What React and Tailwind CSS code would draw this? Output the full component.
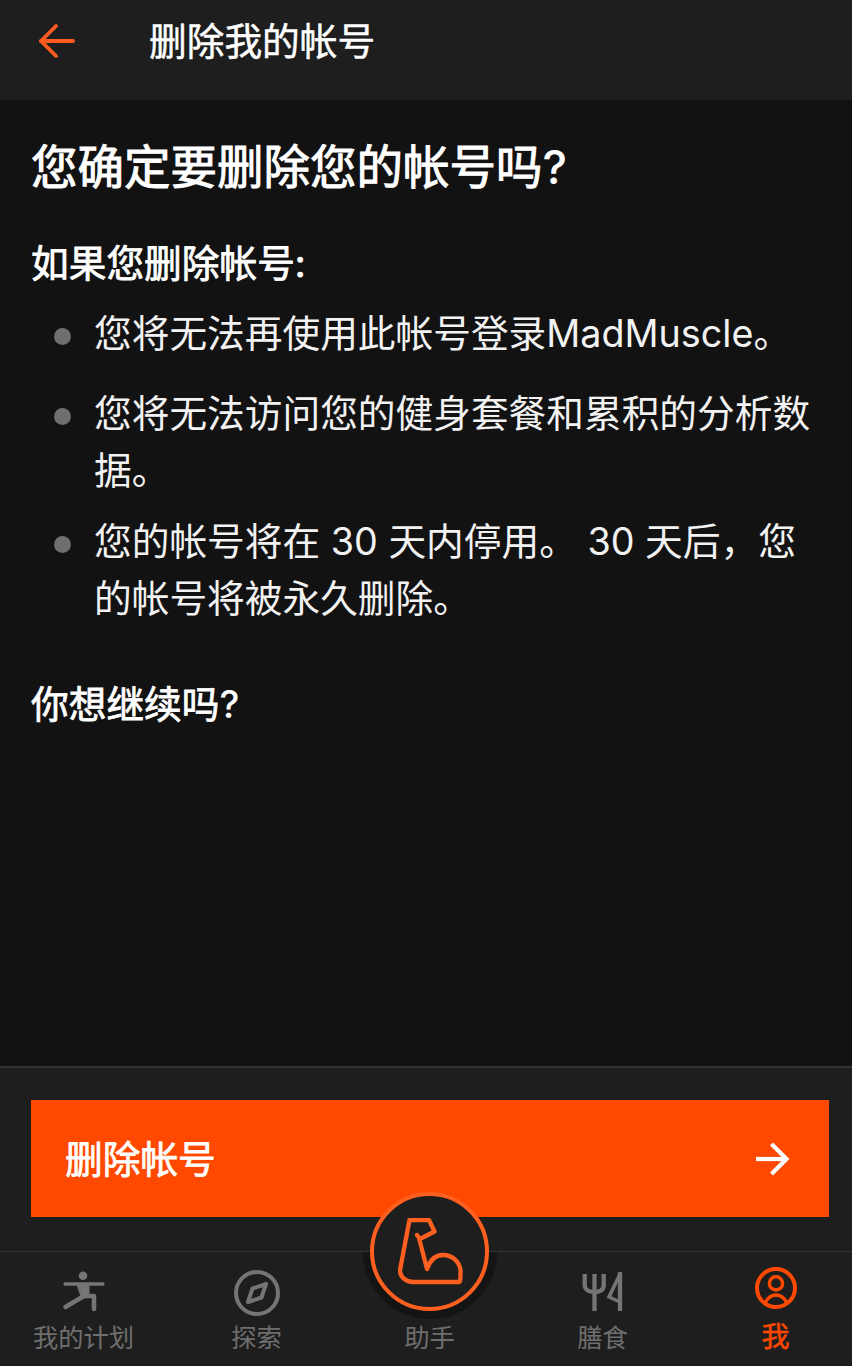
import React from 'react';

const font = "font-['Inter','Noto_Sans_CJK_SC',sans-serif]";

const Bullet = ({ children, className = '' }) => (
  <li className={`flex ${className}`}>
    <span className="w-[17px] h-[17px] rounded-full bg-[#6f6f6f] ml-[22px] mt-[23px] mr-[23px] shrink-0" />
    <p className="text-[37.7px] leading-[57px] text-[#f2f2f2] w-[725px]">{children}</p>
  </li>
);

const BackArrow = () => (
  <svg width="36" height="36" viewBox="0 0 36 36" fill="none" stroke="#ff5a1f" strokeWidth="3.8" strokeLinecap="round" strokeLinejoin="round" className="ml-[39px] mt-[23px]">
    <path d="M34 18H2" />
    <path d="M17 3L2 18L17 33" />
  </svg>
);

const NextArrow = () => (
  <svg width="36" height="36" viewBox="0 0 36 36" fill="none" stroke="#ffffff" strokeWidth="4.2">
    <path d="M2 18H33" />
    <path d="M17.500 3L32.500 18L17.500 33" />
  </svg>
);

const YogaIcon = () => (
  <svg width="44" height="44" viewBox="0 0 44 44" fill="none" stroke="#757575" strokeLinecap="round" strokeLinejoin="round" className="mb-[4px]">
    <circle cx="21" cy="6.700" r="4.300" fill="#757575" stroke="none" />
    <path d="M3 15H41" strokeWidth="3.300" />
    <path d="M22 27L3.500 38" strokeWidth="4.500" />
    <path d="M22 27H32V40" strokeWidth="4.500" />
    <path d="M15 15H27V28H19.500Z" fill="#757575" strokeWidth="1" />
  </svg>
);

const CompassIcon = () => (
  <svg width="48" height="48" viewBox="0 0 48 48" fill="none" stroke="#757575">
    <circle cx="24" cy="24" r="21" strokeWidth="4" />
    <path d="M33 15L28.500 28.500L15 33L19.500 19.500Z" strokeWidth="4" strokeLinejoin="round" />
  </svg>
);

const ForkKnifeIcon = () => (
  <svg width="42" height="42" viewBox="0 0 42 42" fill="none" stroke="#757575" strokeWidth="4.300" className="mb-[4px]">
    <path d="M2.700 3V14C2.700 18 6 21 12.500 21C19 21 21.700 18 21.700 14V3" />
    <path d="M12.500 3V40" />
    <path d="M38 1V40" />
    <path d="M38 3L27 26L38 31" strokeWidth="3.500" />
  </svg>
);

const ProfileIcon = () => (
  <svg width="44" height="44" viewBox="0 0 44 44" fill="none" stroke="#ff4800" strokeWidth="4" className="mb-[7px]">
    <circle cx="22" cy="22" r="19" />
    <circle cx="22" cy="17.400" r="6.600" strokeWidth="3.400" />
    <path d="M11 37C14 31 18 29 22 29C26 29 30 31 33 37" strokeWidth="3.500" />
  </svg>
);

const MuscleIcon = () => (
  <svg width="66" height="68" viewBox="0 0 66 68" fill="none" stroke="#ff5f1f" strokeWidth="4.300" strokeLinecap="round" strokeLinejoin="round" className="ml-[2px]">
    <path d="M19 17L22 21L36.500 13.500L31 2H11.500L2 52C2 59 8 64 15 64H61C62.500 64 62.500 60 62.500 52C61 43 54 37 45 37C38 37 32 42 29 51L21 20" />
  </svg>
);

const Tab = ({ icon, label, active }) => (
  <div className="w-[173px] shrink-0 flex flex-col items-center">
    <div className="h-[65px] flex items-end justify-center">{icon}</div>
    {active ? (
      <span className="mt-[2px] text-[28px] leading-[36px] text-[#ff4800] [-webkit-text-stroke:0.5px_#ff4800]">{label}</span>
    ) : (
      <span className="mt-[4px] text-[25.3px] leading-[34px] text-[#6e6e6e]">{label}</span>
    )}
  </div>
);

export default function App() {
  return (
    <div className={`w-[852px] h-[1366px] flex flex-col bg-[#121212] text-white overflow-hidden ${font}`}>
      <header className="h-[100px] bg-[#1e1e1e] flex items-start shrink-0">
        <BackArrow />
        <h2 className="ml-[74px] mt-[13px] text-[37.7px] leading-[56px] [-webkit-text-stroke:0.5px_white]">删除我的帐号</h2>
      </header>

      <main className="flex-1 px-[32px] pt-[37px]">
        <h1 className="-ml-[1px] text-[46.5px] leading-[60px] [-webkit-text-stroke:1px_white]">
          您确定要删除您的帐号吗<span className="font-medium [-webkit-text-stroke:0]">?</span>
        </h1>
        <h3 className="-ml-[1px] mt-[38px] text-[37.7px] leading-[56px] [-webkit-text-stroke:0.8px_white]">如果您删除帐号:</h3>
        <ul className="mt-[14px]">
          <Bullet>您将无法再使用此帐号登录MadMuscle。</Bullet>
          <Bullet className="mt-[23px]">您将无法访问您的健身套餐和累积的分析数据。</Bullet>
          <Bullet className="mt-[14px]">您的帐号将在 30 天内停用。 30 天后，您的帐号将被永久删除。</Bullet>
        </ul>
        <h3 className="-ml-[1px] mt-[49px] text-[37.7px] leading-[56px] [-webkit-text-stroke:0.8px_white]">
          你想继续吗<span className="font-medium [-webkit-text-stroke:0]">?</span>
        </h3>
      </main>

      <div className="h-[185px] shrink-0 bg-[#1e1e1e] border-t-2 border-[#333333] pt-[32px] px-[31px]">
        <button className="w-[798px] h-[117px] bg-[#ff4800] flex items-center justify-between pl-[34px] pr-[39px]">
          <span className="pt-[1px] text-[37.7px] text-white [-webkit-text-stroke:0.8px_white]">删除帐号</span>
          <NextArrow />
        </button>
      </div>

      <nav className="relative h-[115px] shrink-0 bg-[#1e1e1e] border-t border-[#333333] flex">
        <div className="absolute left-[363px] -top-[67px] w-[134px] h-[134px] rounded-full bg-[#141414] [clip-path:inset(67px_0_0_0)]" />
        <div className="absolute left-[370px] -top-[60px] w-[119px] h-[119px] rounded-full bg-[#1e1e1e] border-[4px] border-[#ff5f1f] flex items-center justify-center">
          <MuscleIcon />
        </div>
        <div className="relative flex -ml-[3px]">
          <Tab icon={<YogaIcon />} label="我的计划" />
          <Tab icon={<CompassIcon />} label="探索" />
          <Tab icon={<span />} label="助手" />
          <Tab icon={<ForkKnifeIcon />} label="膳食" />
          <Tab icon={<ProfileIcon />} label="我" active />
        </div>
      </nav>
    </div>
  );
}
